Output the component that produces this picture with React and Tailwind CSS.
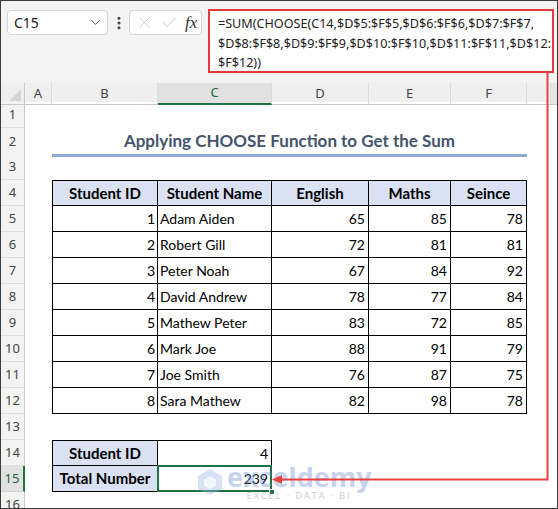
import React from "react";
import { ChevronDown, EllipsisVertical, X, Check } from "lucide-react";

const COLS = "grid grid-cols-[24px_27px_106px_114px_97px_82px_76px_1fr]";

const students = [
  [1, "Adam Aiden", 65, 85, 78],
  [2, "Robert Gill", 72, 81, 81],
  [3, "Peter Noah", 67, 84, 92],
  [4, "David Andrew", 78, 77, 84],
  [5, "Mathew Peter", 83, 72, 85],
  [6, "Mark Joe", 88, 91, 79],
  [7, "Joe Smith", 76, 87, 75],
  [8, "Sara Mathew", 82, 98, 78],
];

function RowHead({ n }) {
  const sel = n === 15;
  return (
    <div
      className={
        sel
          ? "flex items-center justify-center bg-[#e1e1e1] border-b border-[#d4d4d4] border-r-2 border-r-[#217346] text-[#1e6b3f] text-[13px]"
          : "flex items-center justify-center bg-[#f3f3f3] border-b border-[#dedede] border-r border-r-[#c9c9c9] text-[#444] text-[13px]"
      }
      style={{ fontFamily: "'Noto Sans', sans-serif" }}
    >
      {n}
    </div>
  );
}

export default function App() {
  const rows = [];
  for (let r = 1; r <= 16; r++) {
    let cells;
    if (r === 2) {
      cells = (
        <>
          <div />
          <div className="col-span-5 flex items-center justify-center border-b-[3px] border-[#8eaadb] text-[17px] font-bold text-[#44546a]">
            Applying CHOOSE Function to Get the Sum
          </div>
          <div />
        </>
      );
    } else if (r === 4) {
      cells = (
        <>
          <div />
          {["Student ID", "Student Name", "English", "Maths", "Seince"].map((h, i) => (
            <div
              key={h}
              className={`flex items-center justify-center bg-[#d9e1f2] font-bold text-[15px] border-t border-r border-b border-black ${i === 0 ? "border-l" : ""}`}
            >
              {h}
            </div>
          ))}
          <div />
        </>
      );
    } else if (r >= 5 && r <= 12) {
      const s = students[r - 5];
      cells = (
        <>
          <div />
          <div className="flex items-center justify-end pr-[2px] border-l border-r border-b border-black">{s[0]}</div>
          <div className="flex items-center pl-[2px] border-r border-b border-black">{s[1]}</div>
          <div className="flex items-center justify-end pr-[3px] border-r border-b border-black">{s[2]}</div>
          <div className="flex items-center justify-end pr-[3px] border-r border-b border-black">{s[3]}</div>
          <div className="flex items-center justify-end pr-[3px] border-r border-b border-black">{s[4]}</div>
          <div />
        </>
      );
    } else if (r === 14 || r === 15) {
      cells = (
        <>
          <div />
          <div className={`flex items-center justify-center bg-[#d9e1f2] font-bold text-[15px] border-l border-r border-b border-black ${r === 14 ? "border-t" : ""}`}>
            {r === 14 ? "Student ID" : "Total Number"}
          </div>
          <div className={`relative flex items-center justify-end pr-[3px] border-r border-b border-black ${r === 14 ? "border-t" : ""}`}>
            {r === 14 ? 4 : 239}
            {r === 15 && (
              <>
                <div className="absolute -left-px -top-px -right-px -bottom-px border-2 border-[#217346]" />
                <div className="absolute -right-[4px] -bottom-[4px] w-[6px] h-[6px] bg-[#217346] border border-white" />
              </>
            )}
          </div>
          <div />
          <div />
          <div />
          <div />
        </>
      );
    } else {
      cells = (
        <>
          <div />
          <div />
          <div />
          <div />
          <div />
          <div />
          <div />
        </>
      );
    }
    rows.push(
      <div key={r} className={`${COLS} h-[26px] shrink-0`}>
        <RowHead n={r} />
        {cells}
      </div>
    );
  }

  return (
    <div
      className="relative w-[558px] h-[509px] overflow-hidden border border-[#3c3c3c] bg-white flex flex-col text-[14px] text-black"
      style={{ fontFamily: "Lato, 'Liberation Sans', sans-serif" }}
    >
      {/* formula bar */}
      <div className="h-[82px] shrink-0 bg-[#f3f3f3] flex items-start pl-[6px] pt-[9px]">
        <div className="w-[101px] h-[25px] bg-white border border-[#d4d4d4] rounded-[4px] flex items-center justify-between pl-[6px] pr-[4px] text-[14px] text-[#222]" style={{ fontFamily: "'Noto Sans', sans-serif" }}>
          <span>C15</span>
          <ChevronDown size={15} strokeWidth={1.6} className="text-[#555]" />
        </div>
        <div className="w-[21px] h-[25px] flex items-center justify-center text-[#444]">
          <EllipsisVertical size={16} strokeWidth={2.6} />
        </div>
        <div className="w-[73px] h-[25px] bg-white border border-[#d4d4d4] rounded-[4px] flex items-center gap-[6px] pl-[5px] text-[#c3c3c3]">
          <X size={19} strokeWidth={1.1} />
          <Check size={19} strokeWidth={1.1} />
          <span className="text-[17px] italic text-[#333]" style={{ fontFamily: "'Liberation Serif', serif" }}>fx</span>
        </div>
        <div
          className="ml-[6px] -mt-[1px] w-[346px] h-[64px] bg-white border-2 border-[#e23b3b] pl-[8px] pt-[3px] text-[12.6px] leading-[19.5px] text-[#222] whitespace-nowrap"
          style={{ fontFamily: "'Noto Sans', sans-serif" }}
        >
          =SUM(CHOOSE(C14,$D$5:$F$5,$D$6:$F$6,$D$7:$F$7,
          <br />
          $D$8:$F$8,$D$9:$F$9,$D$10:$F$10,$D$11:$F$11,$D$12:
          <br />
          $F$12))
        </div>
      </div>

      {/* column headers */}
      <div className={`${COLS} h-[19px] shrink-0 bg-[#efefef] text-[13px] text-[#444]`} style={{ fontFamily: "'Noto Sans', sans-serif" }}>
        <div className="relative border-r border-b border-[#c9c9c9]">
          <div className="absolute right-[3px] bottom-[3px] w-0 h-0 border-l-[12px] border-l-transparent border-b-[12px] border-b-[#d6d6d6]" />
        </div>
        {["A", "B", "C", "D", "E", "F"].map((c) => (
          <div
            key={c}
            className={
              c === "C"
                ? "flex items-center justify-center border-r border-[#dadada] border-b-2 border-b-[#217346] bg-[#e1e1e1] text-[#1e6b3f]"
                : "flex items-center justify-center border-r border-[#dadada] border-b border-b-[#c9c9c9]"
            }
          >
            {c}
          </div>
        ))}
        <div className="border-b border-[#c9c9c9] flex">
          <div className="w-[24px] border-r border-[#dadada]" />
          <div className="flex-1 bg-[#e6e6e6]" />
        </div>
      </div>

      {/* sheet */}
      <div className="flex flex-col">{rows}</div>

      {/* watermark */}
      <div className="absolute left-[196px] top-[462px] flex items-center gap-[4px] opacity-40 pointer-events-none">
        <svg width="26" height="28" viewBox="0 0 26 28">
          <path d="M13 1 L25 8 L25 21 L13 27 L1 21 L1 8 Z" fill="#9db7e6" />
          <path d="M13 8 L19 11.5 L19 18 L13 21 L7 18 L7 11.5 Z" fill="#e6eefb" />
        </svg>
        <div className="flex flex-col items-center leading-none">
          <span className="text-[27px] font-bold text-[#6f92d6]" style={{ fontFamily: "'Open Sans', sans-serif" }}>exceldemy</span>
          <span className="text-[9px] tracking-[2px] text-[#7a7a7a] mt-[1px]" style={{ fontFamily: "'Open Sans', sans-serif" }}>EXCEL · DATA · BI</span>
        </div>
      </div>

      {/* arrow */}
      <svg className="absolute left-0 top-0 pointer-events-none" width="558" height="509">
        <polyline points="546.5,72 546.5,478.5 279,478.5" fill="none" stroke="#e8413f" strokeWidth="2" />
        <path d="M271 478.5 L281 474 L281 483 Z" fill="#e8413f" />
      </svg>
    </div>
  );
}
